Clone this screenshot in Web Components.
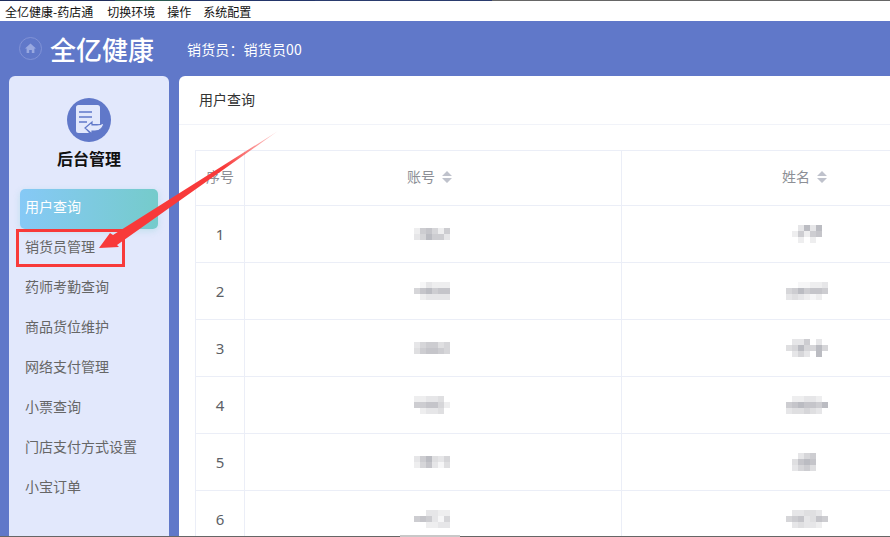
<!DOCTYPE html>
<html lang="zh">
<head>
<meta charset="utf-8">
<title>全亿健康-药店通</title>
<style>
  html, body { margin: 0; height: 100%; overflow: hidden; }
  body {
    width: 890px;
    height: 537px;
    position: relative;
    display: flex;
    flex-direction: column;
    background: #6078c9;
    font-family: "Noto Sans CJK SC", "Noto Sans", sans-serif;
  }
  menu-bar span:first-child { padding-right: 2px; }
</style>
</head>
<body>
  <menu-bar>
    <span>全亿健康-药店通</span><span>切换环境</span><span>操作</span><span>系统配置</span>
  </menu-bar>
  <top-header brand="全亿健康" user="销货员：销货员00"></top-header>
  <main-layout>
    <side-nav slot="side" title="后台管理">
      <nav-item active>用户查询</nav-item>
      <nav-item>销货员管理</nav-item>
      <nav-item>药师考勤查询</nav-item>
      <nav-item>商品货位维护</nav-item>
      <nav-item>网络支付管理</nav-item>
      <nav-item>小票查询</nav-item>
      <nav-item>门店支付方式设置</nav-item>
      <nav-item>小宝订单</nav-item>
    </side-nav>
    <user-table slot="content" heading="用户查询"></user-table>
  </main-layout>
  <arrow-note></arrow-note>
  <window-edge></window-edge>

<script>
/**
 * 상단 메뉴 막대
 */
class MenuBar extends HTMLElement {
  constructor() {
    super();
    this.attachShadow({ mode: 'open' }).innerHTML = `
      <style>
        :host {
          display: flex;
          flex: none;
          height: 21px;
          box-sizing: border-box;
          padding: 2px 0 0 5px;
          gap: 12px;
          background:
            linear-gradient(90deg, #1f2d5c 0 115px, #2b5a52 115px 180px, #23356a 180px 315px, #2a3b6e 315px 492px, #666 492px) 0 0 / 100% 1px no-repeat,
            #fff;
          color: #111;
          font-size: 12px;
          line-height: 19px;
        }
      </style>
      <slot></slot>`;
  }
}
customElements.define('menu-bar', MenuBar);

class TopHeader extends HTMLElement {
  connectedCallback() {
    this.attachShadow({ mode: 'open' }).innerHTML = `
      <style>
        :host {
          display: flex;
          flex: none;
          align-items: center;
          height: 55px;
          padding-left: 19px;
          color: #fff;
        }
        svg { width: 23px; height: 23px; flex: none; }
        .brand { margin-left: 8px; font-size: 26px; line-height: 55px; font-weight: 500; }
        .user { margin-left: 33px; font-size: 14px; letter-spacing: .15px; }
      </style>
      <svg viewBox="0 0 23 23">
        <circle cx="11.5" cy="11.5" r="11" fill="none" stroke="#8092d6" stroke-width="1"/>
        <path d="M11.5 6.5 L17 11.5 H15.4 V16 H12.8 V13 H10.2 V16 H7.6 V11.5 H6 Z" fill="#98a8e0"/>
      </svg>
      <div class="brand">${this.getAttribute('brand')}</div>
      <div class="user">${this.getAttribute('user')}</div>`;
  }
}
customElements.define('top-header', TopHeader);

class MainLayout extends HTMLElement {
  constructor() {
    super();
    this.attachShadow({ mode: 'open' }).innerHTML = `
      <style>
        :host {
          display: flex;
          flex: 1;
          min-height: 0;
          gap: 10px;
          padding-left: 9px;
        }
      </style>
      <slot name="side"></slot>
      <slot name="content"></slot>`;
  }
}
customElements.define('main-layout', MainLayout);

class SideNav extends HTMLElement {
  connectedCallback() {
    this.attachShadow({ mode: 'open' }).innerHTML = `
      <style>
        :host {
          display: flex;
          flex-direction: column;
          flex: none;
          width: 160px;
          box-sizing: border-box;
          padding-top: 22px;
          background: #e2e8fc;
          border-radius: 6px 6px 0 0;
        }
        .logo { width: 44px; height: 44px; margin: 0 auto; display: block; }
        h2 {
          margin: 0;
          text-align: center;
          font-size: 16px;
          line-height: 32px;
          font-weight: 700;
          color: #111;
        }
        .list { display: flex; flex-direction: column; margin-top: 15px; padding-left: 11px; }
      </style>
      <svg class="logo" viewBox="0 0 44 44">
        <circle cx="22" cy="22" r="22" fill="#6078c9"/>
        <path d="M9 9.5 Q9 7 11.5 7 H30.5 Q33 7 33 9.5 V26 H24 L18 30 L22 35 H11.5 Q9 35 9 32.5 Z" fill="#e2e8fc"/>
        <path d="M12 14 H25 M12 19 H25 M12 24 H20" stroke="#6078c9" stroke-width="1.6" fill="none"/>
        <path d="M18 30 L25 24 V27 H30 Q34 27 37 24 Q36 33 28 33 H25 V36 Z" fill="#e2e8fc" stroke="#6078c9" stroke-width="1.2"/>
      </svg>
      <h2>${this.getAttribute('title')}</h2>
      <div class="list"><slot></slot></div>`;
  }
}
customElements.define('side-nav', SideNav);

class NavItem extends HTMLElement {
  constructor() {
    super();
    this.attachShadow({ mode: 'open' }).innerHTML = `
      <style>
        :host {
          display: block;
          width: 138px;
          height: 40px;
          box-sizing: border-box;
          padding-left: 5px;
          border-radius: 5px;
          color: #666;
          font-size: 14px;
          line-height: 35px;
        }
        :host([active]) {
          color: #fff;
          background: linear-gradient(90deg, #86c9f6, #75cbcb);
          box-shadow: 0 2px 6px rgba(117, 203, 203, .3);
        }
      </style>
      <slot></slot>`;
  }
}
customElements.define('nav-item', NavItem);

/**
 * 가려진 값을 모자이크 칸으로 표시 (칸 하나가 6px)
 * 값 1-9 는 회색 농도, 0 은 투명
 */
class MosaicBlur extends HTMLElement {
  connectedCallback() {
    const rows = this.getAttribute('cells').split('/');
    const shades = ['transparent', '#f6f6f7', '#eeeeef', '#e6e6e8', '#dfdfe1', '#d6d6d9', '#cdcdd1', '#c5c5ca', '#bbbcc2', '#b0b0b4'];
    const cells = rows.map(row => [...row].map(c => `<i style="background:${shades[+c]}"></i>`).join('')).join('');
    this.attachShadow({ mode: 'open' }).innerHTML = `
      <style>
        :host {
          display: grid;
          width: fit-content;
          grid-template-columns: repeat(${rows[0].length}, 6px);
          grid-auto-rows: 6px;
        }
        i { display: block; }
      </style>
      ${cells}`;
  }
}
customElements.define('mosaic-blur', MosaicBlur);

class SortCaret extends HTMLElement {
  constructor() {
    super();
    this.attachShadow({ mode: 'open' }).innerHTML = `
      <style>
        :host { display: inline-block; width: 10px; height: 12px; margin-left: 7px; vertical-align: -1px; }
        svg { display: block; }
      </style>
      <svg width="10" height="12" viewBox="0 0 10 12">
        <path d="M5 0 L10 5 H0 Z M5 12 L0 7 H10 Z" fill="#bfc2cc"/>
      </svg>`;
  }
}
customElements.define('sort-caret', SortCaret);

const userRows = [
  { no: 1, account: '267526/358663', name: '003838/026267/002020' },
  { no: 2, account: '013222/578677/023333', name: '00112230/56867760/34321200' },
  { no: 3, account: '356645/467765', name: '0336030/4585585/0353080' },
  { no: 4, account: '223340/667752/023340', name: '0223320/6787768/3445430' },
  { no: 5, account: '368435/257314', name: '003560/047870/035640' },
  { no: 6, account: '003322/676315/002233', name: '0334430/5673476/0343320' }
];

class UserTable extends HTMLElement {
  connectedCallback() {
    const rows = userRows.map(r => `
      <tr>
        <td>${r.no}</td>
        <td class="account"><mosaic-blur cells="${r.account}"></mosaic-blur></td>
        <td class="name"><mosaic-blur cells="${r.name}"></mosaic-blur></td>
      </tr>`).join('');
    this.attachShadow({ mode: 'open' }).innerHTML = `
      <style>
        :host {
          display: block;
          flex: 1;
          min-width: 0;
          background: #fff;
          border-radius: 6px 0 0 0;
          overflow: hidden;
        }
        .crumb {
          height: 49px;
          box-sizing: border-box;
          padding-left: 20px;
          border-bottom: 1px solid #f1f3f9;
          color: #333;
          font-size: 14px;
          line-height: 47px;
        }
        .wrap { padding: 25px 0 0 16px; }
        table {
          border-collapse: collapse;
          table-layout: fixed;
          width: 695px;
        }
        th, td {
          border: 1px solid #ebeef7;
          padding: 0;
          text-align: center;
          font-size: 14px;
        }
        th:last-child, td:last-child { border-right: 0; }
        th { height: 55px; padding-bottom: 5px; box-sizing: border-box; color: #8d8f96; font-weight: 400; }
        th.account { padding-right: 7px; }
        th.name { text-align: left; padding-left: 160px; }
        td { height: 56px; color: #5c5f66; font-family: "Noto Sans", sans-serif; font-size: 15px; }
        td.account mosaic-blur { margin-left: 169px; }
        td.name mosaic-blur { margin-left: 164px; }
      </style>
      <div class="crumb">${this.getAttribute('heading')}</div>
      <div class="wrap">
        <table>
          <colgroup><col style="width:49px"><col style="width:377px"><col style="width:269px"></colgroup>
          <tr><th>序号</th><th class="account">账号<sort-caret></sort-caret></th><th class="name">姓名<sort-caret></sort-caret></th></tr>
          ${rows}
        </table>
      </div>`;
  }
}
customElements.define('user-table', UserTable);

/**
 * 스크린샷 위에 그려진 빨간 화살표와 상자
 */
class ArrowNote extends HTMLElement {
  constructor() {
    super();
    this.attachShadow({ mode: 'open' }).innerHTML = `
      <style>
        :host { position: absolute; left: 0; top: 0; width: 890px; height: 537px; pointer-events: none; }
        svg { display: block; }
      </style>
      <svg width="890" height="537" viewBox="0 0 890 537">
        <defs>
          <linearGradient id="tail" gradientUnits="userSpaceOnUse" x1="278" y1="131" x2="225" y2="168">
            <stop offset="0" stop-color="#f83a3a" stop-opacity=".2"/>
            <stop offset="1" stop-color="#f83a3a"/>
          </linearGradient>
        </defs>
        <rect x="17.5" y="230.5" width="106" height="35" fill="none" stroke="#f83a3a" stroke-width="3"/>
        <path d="M278 131 L113 235 L110 233 L99 248 L119 247 L117 245 Z" fill="url(#tail)"/>
      </svg>`;
  }
}
customElements.define('arrow-note', ArrowNote);

class WindowEdge extends HTMLElement {
  constructor() {
    super();
    this.attachShadow({ mode: 'open' }).innerHTML = `
      <style>
        :host { position: absolute; left: 0; right: 0; bottom: 0; height: 1px; background: #666; }
        div { position: absolute; left: 400px; width: 60px; bottom: 0; height: 2px; background: #c8c8c8; }
      </style>
      <div></div>`;
  }
}
customElements.define('window-edge', WindowEdge);
</script>
</body>
</html>
